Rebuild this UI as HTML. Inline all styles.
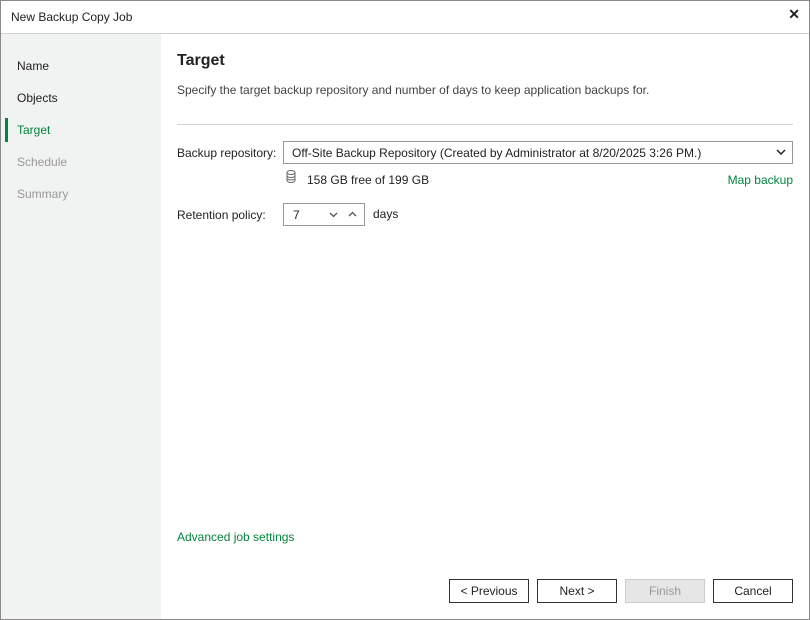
<!DOCTYPE html>
<html><head><meta charset="utf-8"><style>
*{box-sizing:border-box;margin:0;padding:0}
body{width:810px;height:620px;background:#fff;font-family:"Liberation Sans",sans-serif;font-size:12px;color:#222;position:relative;overflow:hidden}
.win{position:absolute;left:0;top:0;width:810px;height:620px;border:1px solid #8a8a8a;z-index:5;pointer-events:none}
.title{position:absolute;left:11px;top:10px;font-size:12px}
.close{position:absolute;right:10px;top:6px;font-size:14px;font-weight:bold}
.sep{position:absolute;left:1px;right:1px;top:33px;height:1px;background:#d0d0d0}
.side{position:absolute;left:1px;top:34px;width:160px;height:585px;background:#f1f2f2}
.side div{position:absolute;left:16px;font-size:12px}
.a{position:absolute}
.btn{position:absolute;top:579px;height:24px;width:80px;border:1px solid #333;background:#fff;text-align:center;line-height:22px;font-size:12px}
.green{color:#00863c}
</style></head><body>
<div class="win"></div>
<div class="title">New Backup Copy Job</div>
<div class="close">✕</div>
<div class="sep"></div>
<div class="side">
<div style="top:25px">Name</div>
<div style="top:57px">Objects</div>
<div style="top:89px;color:#00863c">Target</div>
<div style="left:4px;top:84px;width:3px;height:24px;background:#00863c"></div>
<div style="top:121px;color:#999">Schedule</div>
<div style="top:153px;color:#999">Summary</div>
</div>
<div class="a" style="left:177px;top:52px;font-size:16px;font-weight:bold">Target</div>
<div class="a" style="left:177px;top:83px;color:#444">Specify the target backup repository and number of days to keep application backups for.</div>
<div class="a" style="left:177px;top:124px;width:616px;height:1px;background:#d0d0d0"></div>
<div class="a" style="left:177px;top:146px">Backup repository:</div>
<div class="a" style="left:283px;top:141px;width:510px;height:23px;border:1px solid #999;padding:4px 8px">Off-Site Backup Repository (Created by Administrator at 8/20/2025 3:26 PM.)
<svg style="position:absolute;right:6px;top:7px" width="10" height="7"><path d="M1 1L5 5L9 1" stroke="#222" stroke-width="1.5" fill="none"/></svg></div>
<svg class="a" style="left:286px;top:170px" width="10" height="13"><ellipse cx="5" cy="2.5" rx="4" ry="2" fill="none" stroke="#666"/><path d="M1 2.5V10.5A4 2 0 0 0 9 10.5V2.5M1 5.5A4 2 0 0 0 9 5.5M1 8A4 2 0 0 0 9 8" fill="none" stroke="#666"/></svg>
<div class="a" style="left:307px;top:173px">158 GB free of 199 GB</div>
<div class="a green" style="right:17px;top:173px">Map backup</div>
<div class="a" style="left:177px;top:208px">Retention policy:</div>
<div class="a" style="left:283px;top:203px;width:82px;height:23px;border:1px solid #999;padding:4px 9px">7
<svg style="position:absolute;left:45px;top:8px" width="9" height="6"><path d="M1 1L4.5 4.5L8 1" stroke="#555" stroke-width="1.3" fill="none"/></svg>
<svg style="position:absolute;left:64px;top:7px" width="9" height="6"><path d="M1 5L4.5 1.5L8 5" stroke="#555" stroke-width="1.3" fill="none"/></svg></div>
<div class="a" style="left:373px;top:207px">days</div>
<div class="a green" style="left:177px;top:530px">Advanced job settings</div>
<div class="btn" style="left:449px">&lt; Previous</div>
<div class="btn" style="left:537px">Next &gt;</div>
<div class="btn" style="left:625px;background:#e6e6e6;border-color:#ccc;color:#999">Finish</div>
<div class="btn" style="left:713px">Cancel</div>
</body></html>
